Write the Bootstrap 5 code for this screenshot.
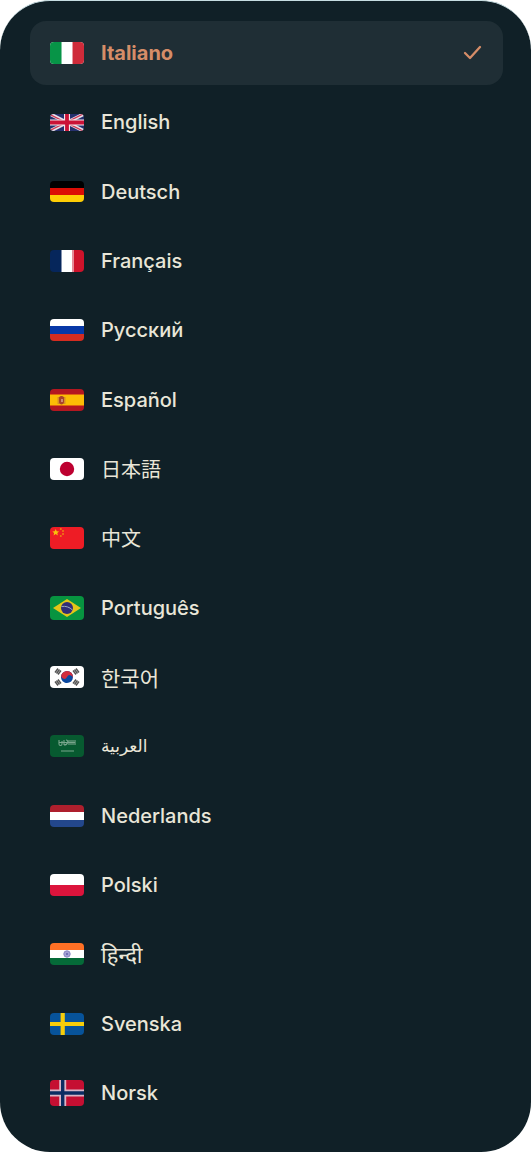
<!DOCTYPE html>
<html lang="it">
<head>
<meta charset="utf-8">
<meta name="viewport" content="width=device-width, initial-scale=1">
<title>Lingua</title>
<link href="https://cdn.jsdelivr.net/npm/bootstrap@5.3.0/dist/css/bootstrap.min.css" rel="stylesheet">
<style>
  body { background: #fff; font-family: Inter, "Noto Sans", "Noto Sans CJK SC", sans-serif; }
  .lang-panel { background: #102027; border-top: 1px solid #c6dde2; border-radius: 50px; padding: 20px 28px 27px 30px; }
  .lang-item { height: 64px; padding: 0 20px; gap: 17px; border: 0; border-radius: 16px; background: transparent; color: #e9e6d8; font-size: 20px; line-height: 28px; font-weight: 500; text-align: start; }
  .lang-item:hover { background: #18282f; }
  .lang-item.is-current { background: #1f2e35; color: #d58d68; font-weight: 700; }
  .flag { width: 34px; border-radius: 4px; flex: none; }
  .tick { width: 20px; height: 20px; }
  .cjk { font-family: "Noto Sans CJK JP", sans-serif; font-weight: 400; }
  .kor { font-family: "Noto Sans CJK KR", sans-serif; font-weight: 400; font-size: 21px; }
  .arab { font-family: "DejaVu Sans", sans-serif; font-weight: 400; font-size: 17px; }
  .deva { font-family: "Noto Sans", sans-serif; font-weight: 400; font-size: 22px; }
</style>
</head>
<body>
<main class="lang-panel min-vh-100 d-flex flex-column">
  <ul class="list-unstyled m-0 flex-grow-1 d-flex flex-column justify-content-between">
    <li><button type="button" class="lang-item is-current w-100 d-flex align-items-center" aria-current="true">
      <svg class="flag" height="22" viewBox="0 0 34 22" aria-hidden="true"><path fill="#fff" d="M0 0h34v22H0z"/><path fill="#079447" d="M0 0h11v22H0z"/><path fill="#7fc6a0" d="M11 0h1v22h-1z"/><path fill="#e69aa0" d="M22 0h1v22h-1z"/><path fill="#cf2b3a" d="M23 0h11v22H23z"/></svg>
      <span>Italiano</span>
      <svg class="tick ms-auto" viewBox="0 0 20 20" fill="none" stroke="#d58d68" stroke-width="2.300" stroke-linecap="round" stroke-linejoin="round" aria-hidden="true"><path d="M2 10 7 15 17 4"/></svg>
    </button></li>
    <li><button type="button" class="lang-item w-100 d-flex align-items-center">
      <svg class="flag" height="17" viewBox="0 0 34 17" aria-hidden="true"><path fill="#25306d" d="M0 0h34v17H0z"/><path stroke="#e8dfe8" stroke-width="3.600" d="M0 0l34 17M34 0L0 17"/><path stroke="#cf3551" stroke-width="1.200" d="M0 .5l34 17M34 -.5L0 16.500"/><path stroke="#f1e6ec" stroke-width="6" d="M17 0v17M0 8.500h34"/><path stroke="#cb1237" stroke-width="3.800" d="M17 0v17M0 8.500h34"/></svg>
      <span>English</span>
    </button></li>
    <li><button type="button" class="lang-item w-100 d-flex align-items-center">
      <svg class="flag" height="21" viewBox="0 0 34 21" aria-hidden="true"><path d="M0 0h34v7H0z"/><path fill="#dc0d05" d="M0 7h34v7H0z"/><path fill="#ffce05" d="M0 14h34v7H0z"/></svg>
      <span>Deutsch</span>
    </button></li>
    <li><button type="button" class="lang-item w-100 d-flex align-items-center">
      <svg class="flag" height="22" viewBox="0 0 34 22" aria-hidden="true"><path fill="#fff" d="M11 0h12v22H11z"/><path fill="#06265b" d="M0 0h11v22H0z"/><path fill="#8291ae" d="M11 0h1v22h-1z"/><path fill="#e58b98" d="M22 0h2v22h-2z"/><path fill="#ce132b" d="M24 0h10v22H24z"/></svg>
      <span>Français</span>
    </button></li>
    <li><button type="button" class="lang-item w-100 d-flex align-items-center">
      <svg class="flag" height="22" viewBox="0 0 34 22" aria-hidden="true"><path fill="#fff" d="M0 0h34v8H0z"/><path fill="#0738a7" d="M0 7h34v8H0z"/><path fill="#d52c20" d="M0 15h34v7H0z"/></svg>
      <span>Русский</span>
    </button></li>
    <li><button type="button" class="lang-item w-100 d-flex align-items-center">
      <svg class="flag" height="22" viewBox="0 0 34 22" aria-hidden="true"><path fill="#b41720" d="M0 0h34v22H0z"/><path fill="#df6410" d="M0 5h34v12H0z"/><path fill="#fcbd05" d="M0 6h34v10H0z"/><path fill="#d79123" d="M7.500 8h8v7h-8z"/><path fill="#a9422c" d="M9 8.500c1-2 4-2 5 0v5c-1 2.500-4 2.500-5 0z"/><path fill="#cf8c74" d="M11 10h2v3h-2z"/></svg>
      <span>Español</span>
    </button></li>
    <li><button type="button" class="lang-item w-100 d-flex align-items-center">
      <svg class="flag" height="22" viewBox="0 0 34 22" aria-hidden="true"><path fill="#fff" d="M0 0h34v22H0z"/><circle cx="17" cy="11" r="7.200" fill="#bd0030"/></svg>
      <span class="cjk" lang="ja">日本語</span>
    </button></li>
    <li><button type="button" class="lang-item w-100 d-flex align-items-center">
      <svg class="flag" height="22" viewBox="0 0 34 22" aria-hidden="true"><path fill="#ee1c25" d="M0 0h34v22H0z"/><path fill="#f9c20b" d="M5.700 2l1 2.200 2.400.2-1.800 1.600.5 2.400-2.100-1.300-2.100 1.300.5-2.400-1.800-1.600 2.400-.2z"/><g fill="#ef8115"><circle cx="10.800" cy="2" r="1"/><circle cx="13" cy="4" r="1"/><circle cx="13" cy="7" r="1"/><circle cx="10.800" cy="9" r="1"/></g></svg>
      <span class="cjk" lang="zh">中文</span>
    </button></li>
    <li><button type="button" class="lang-item w-100 d-flex align-items-center">
      <svg class="flag" height="24" viewBox="0 0 34 24" aria-hidden="true"><path fill="#079440" d="M0 0h34v24H0z"/><path fill="#e3c518" d="M17 3l14 9-14 9-14-9z"/><circle cx="17" cy="12" r="6" fill="#302d77"/><path fill="none" stroke="#9aabc0" stroke-width="1" d="M11.500 10.500c4-.7 8 .5 11 3.500"/></svg>
      <span>Português</span>
    </button></li>
    <li><button type="button" class="lang-item w-100 d-flex align-items-center">
      <svg class="flag" height="22" viewBox="0 0 34 22" aria-hidden="true"><path fill="#fff" d="M0 0h34v22H0z"/><g transform="rotate(24 17 11)"><circle cx="17" cy="11" r="6" fill="#0a48a0"/><path fill="#d22d3d" d="M11 11a6 6 0 0 1 12 0 3 3 0 0 0-6 0 3 3 0 0 1-6 0z"/></g><path stroke="#555" stroke-width="1.400" d="M5 6.500l3-4M6.500 7.500l3-4M8 8.500l3-4M23 17.500l3-4M24.500 18.500l3-4M26 19.500l3-4M29 6.500l-3-4M27.500 7.500l-3-4M26 8.500l-3-4M11 17.500l-3-4M9.500 18.500l-3-4M8 19.500l-3-4"/></svg>
      <span class="kor" lang="ko">한국어</span>
    </button></li>
    <li><button type="button" class="lang-item w-100 d-flex align-items-center">
      <svg class="flag" height="22" viewBox="0 0 34 22" aria-hidden="true"><path fill="#075a30" d="M0 0h34v22H0z"/><g fill="none" stroke="#78a58b" stroke-width="1.100"><path d="M9 5v4c0 2 3 2 3 0V6m2-1v5m2-5c3 0 2 5-2 5m5-5v5m2-5v5m2-5v5m2-5v5M9 7.500h16"/><path d="M11 16h13"/></g></svg>
      <span class="arab" lang="ar">العربية</span>
    </button></li>
    <li><button type="button" class="lang-item w-100 d-flex align-items-center">
      <svg class="flag" height="22" viewBox="0 0 34 22" aria-hidden="true"><path fill="#fff" d="M0 7h34v8H0z"/><path fill="#ae1f2d" d="M0 0h34v7H0z"/><path fill="#23478c" d="M0 15h34v7H0z"/></svg>
      <span>Nederlands</span>
    </button></li>
    <li><button type="button" class="lang-item w-100 d-flex align-items-center">
      <svg class="flag" height="22" viewBox="0 0 34 22" aria-hidden="true"><path fill="#fff" d="M0 0h34v11H0z"/><path fill="#dc143c" d="M0 11h34v11H0z"/></svg>
      <span>Polski</span>
    </button></li>
    <li><button type="button" class="lang-item w-100 d-flex align-items-center">
      <svg class="flag" height="22" viewBox="0 0 34 22" aria-hidden="true"><path fill="#fff" d="M0 7h34v8H0z"/><path fill="#ff7025" d="M0 0h34v7H0z"/><path fill="#056a38" d="M0 15h34v7H0z"/><circle cx="17" cy="11" r="3.200" fill="#a5a3d6" stroke="#8a87c6"/><circle cx="17" cy="11" r="1" fill="#6562ad"/></svg>
      <span class="deva" lang="hi">हिन्दी</span>
    </button></li>
    <li><button type="button" class="lang-item w-100 d-flex align-items-center">
      <svg class="flag" height="22" viewBox="0 0 34 22" aria-hidden="true"><path fill="#07539a" d="M0 0h34v22H0z"/><path stroke="#f7cd09" stroke-width="4.200" d="M12.700 0v22M0 11h34"/></svg>
      <span>Svenska</span>
    </button></li>
    <li><button type="button" class="lang-item w-100 d-flex align-items-center">
      <svg class="flag" height="26" viewBox="0 0 34 26" aria-hidden="true"><path fill="#c50f32" d="M0 0h34v26H0z"/><path stroke="#d9b5c5" stroke-width="7" d="M12.700 0v26M0 13h34"/><path stroke="#0b2c62" stroke-width="3.400" d="M12.700 0v26M0 13h34"/></svg>
      <span>Norsk</span>
    </button></li>
  </ul>
</main>
<script src="https://cdn.jsdelivr.net/npm/bootstrap@5.3.0/dist/js/bootstrap.bundle.min.js"></script>
</body>
</html>
